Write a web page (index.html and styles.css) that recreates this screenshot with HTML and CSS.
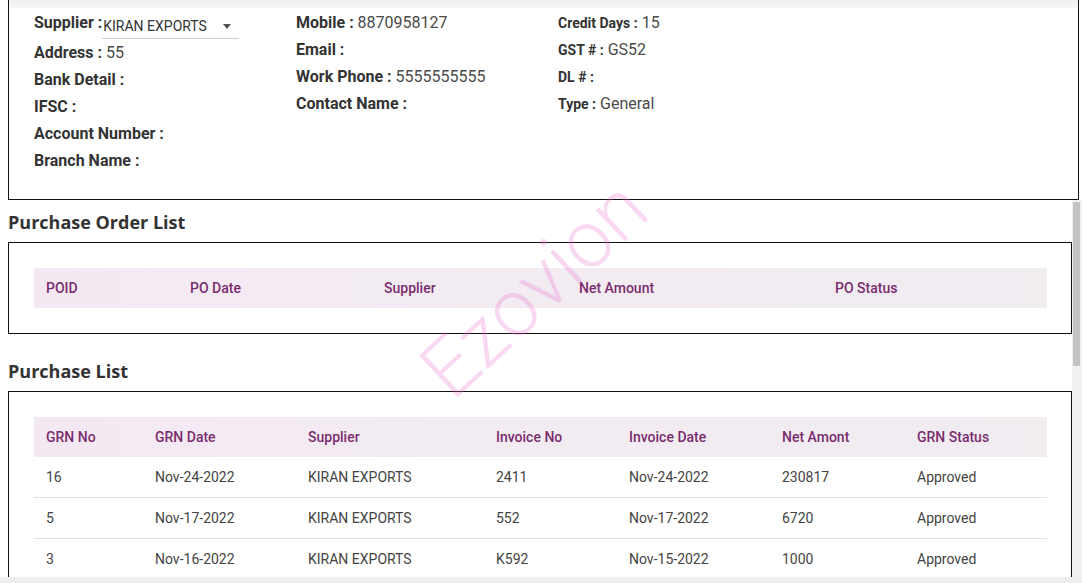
FILE: index.html
```html
<!DOCTYPE html>
<html lang="en">
<head>
<meta charset="utf-8">
<title>Supplier Detail</title>
<link rel="stylesheet" href="styles.css">
</head>
<body>
<div class="page">
  <section class="supplier-card">
    <div class="card-strip"></div>
    <div class="info-grid">
      <div class="info-col">
        <div class="info-row supplier-row">
          <span class="lbl">Supplier :</span>
          <div class="select"><span class="select-val">KIRAN EXPORTS</span><span class="caret"></span></div>
        </div>
        <div class="info-row"><span class="lbl">Address :</span> <span class="val">55</span></div>
        <div class="info-row"><span class="lbl">Bank Detail :</span></div>
        <div class="info-row"><span class="lbl">IFSC :</span></div>
        <div class="info-row"><span class="lbl">Account Number :</span></div>
        <div class="info-row"><span class="lbl">Branch Name :</span></div>
      </div>
      <div class="info-col">
        <div class="info-row"><span class="lbl">Mobile :</span> <span class="val">8870958127</span></div>
        <div class="info-row"><span class="lbl">Email :</span></div>
        <div class="info-row"><span class="lbl">Work Phone :</span> <span class="val">5555555555</span></div>
        <div class="info-row"><span class="lbl">Contact Name :</span></div>
      </div>
      <div class="info-col small">
        <div class="info-row"><span class="lbl">Credit Days :</span> <span class="val">15</span></div>
        <div class="info-row"><span class="lbl">GST # :</span> <span class="val">GS52</span></div>
        <div class="info-row"><span class="lbl">DL # :</span></div>
        <div class="info-row"><span class="lbl">Type :</span> <span class="val">General</span></div>
      </div>
    </div>
  </section>

  <div class="lists">
    <h2 class="list-title">Purchase Order List</h2>
    <div class="list-box">
      <div class="gtable po">
        <div class="grow ghead">
          <div class="gcell">POID</div>
          <div class="gcell">PO Date</div>
          <div class="gcell">Supplier</div>
          <div class="gcell">Net Amount</div>
          <div class="gcell">PO Status</div>
        </div>
      </div>
    </div>

    <h2 class="list-title">Purchase List</h2>
    <div class="list-box">
      <div class="gtable grn">
        <div class="grow ghead">
          <div class="gcell">GRN No</div>
          <div class="gcell">GRN Date</div>
          <div class="gcell">Supplier</div>
          <div class="gcell">Invoice No</div>
          <div class="gcell">Invoice Date</div>
          <div class="gcell">Net Amont</div>
          <div class="gcell">GRN Status</div>
        </div>
        <div class="grow gbody">
          <div class="gcell">16</div>
          <div class="gcell">Nov-24-2022</div>
          <div class="gcell">KIRAN EXPORTS</div>
          <div class="gcell">2411</div>
          <div class="gcell">Nov-24-2022</div>
          <div class="gcell">230817</div>
          <div class="gcell">Approved</div>
        </div>
        <div class="grow gbody">
          <div class="gcell">5</div>
          <div class="gcell">Nov-17-2022</div>
          <div class="gcell">KIRAN EXPORTS</div>
          <div class="gcell">552</div>
          <div class="gcell">Nov-17-2022</div>
          <div class="gcell">6720</div>
          <div class="gcell">Approved</div>
        </div>
        <div class="grow gbody">
          <div class="gcell">3</div>
          <div class="gcell">Nov-16-2022</div>
          <div class="gcell">KIRAN EXPORTS</div>
          <div class="gcell">K592</div>
          <div class="gcell">Nov-15-2022</div>
          <div class="gcell">1000</div>
          <div class="gcell">Approved</div>
        </div>
      </div>
    </div>

    <div class="scrollbar"><div class="thumb"></div></div>
  </div>
  <div class="bottom-strip"></div>

  <div class="watermark">Ezovion</div>
</div>
</body>
</html>
```

FILE: styles.css
```css
* { box-sizing: border-box; }

html, body {
  margin: 0;
  padding: 0;
  background: #ffffff;
}

body {
  font-family: Roboto, "Liberation Sans", Arial, sans-serif;
  color: #444444;
}

.page {
  position: relative;
  width: 1082px;
  height: 583px;
  overflow: hidden;
}

/* ---------- supplier card ---------- */
.supplier-card {
  margin: 0 3px 0 8px;
  height: 200px;
  border: 1px solid #111111;
  border-top: none;
  background: #ffffff;
}

.card-strip {
  height: 8px;
  background: linear-gradient(#efefef, #f7f7f7);
}

.info-grid {
  display: grid;
  grid-template-columns: 262px 262px 262px;
  padding: 1px 0 0 25px;
}

.info-col {
  display: flex;
  flex-direction: column;
}

.info-row {
  height: 27px;
  line-height: 27px;
  font-size: 16px;
  white-space: nowrap;
}

.lbl {
  font-weight: 700;
  color: #333333;
}

.val {
  color: #4a4a4a;
}

.info-col.small .lbl {
  font-size: 14px;
}

.supplier-row {
  height: 30px;
  display: flex;
  align-items: flex-start;
}

.select {
  width: 137px;
  height: 30px;
  padding: 7px 8px 0 1px;
  border-bottom: 1px solid #cfcfcf;
  display: flex;
  align-items: flex-start;
  justify-content: space-between;
}

.select-val {
  font-size: 14px;
  line-height: 21px;
  color: #333333;
}

.caret {
  margin-top: 8px;
  width: 0;
  height: 0;
  border-left: 4px solid transparent;
  border-right: 4px solid transparent;
  border-top: 5px solid #555555;
}

/* ---------- lists ---------- */
.lists {
  position: relative;
  height: 377px;
  overflow: hidden;
  padding: 10px 10px 0 8px;
}

.list-title {
  margin: 0 0 8px 0;
  height: 24px;
  line-height: 24px;
  font-family: "Open Sans", "Liberation Sans", sans-serif;
  font-size: 18px;
  font-weight: 700;
  color: #333333;
}

.list-box {
  border: 1px solid #111111;
  padding: 25px 24px 25px 25px;
  margin-bottom: 25px;
  background: #ffffff;
}

.gtable {
  font-size: 14px;
}

.grow {
  display: grid;
}

.po .grow {
  grid-template-columns: 144px 194px 195px 256px 1fr;
}

.grn .grow {
  grid-template-columns: 109px 153px 188px 133px 153px 135px 1fr;
}

.ghead {
  height: 40px;
  line-height: 40px;
  background: linear-gradient(to right, #f4e9f3, #f2ecf2 60%, #f0ecf0);
  color: #7a2d6e;
  font-weight: 500;
}

.gbody {
  height: 41px;
  line-height: 40px;
  border-bottom: 1px solid #e2e2e2;
  color: #444444;
}

.gcell {
  padding-left: 12px;
  white-space: nowrap;
}

/* decorative scrollbar of the lists pane */
.scrollbar {
  position: absolute;
  top: 0;
  right: 0;
  width: 10px;
  height: 100%;
  background: #f1f1f1;
}

.thumb {
  margin: 2px 0 0 1px;
  width: 7px;
  height: 164px;
  background: #c3c3c3;
}

.bottom-strip {
  height: 6px;
  background: #efefef;
}

/* watermark */
.watermark {
  position: absolute;
  left: 534px;
  top: 289px;
  transform: translate(-50%, -50%) rotate(-43deg);
  font-family: Roboto, "Liberation Sans", sans-serif;
  font-weight: 300;
  font-size: 80px;
  line-height: 1;
  color: rgba(232, 110, 205, 0.26);
  pointer-events: none;
  white-space: nowrap;
}
```
